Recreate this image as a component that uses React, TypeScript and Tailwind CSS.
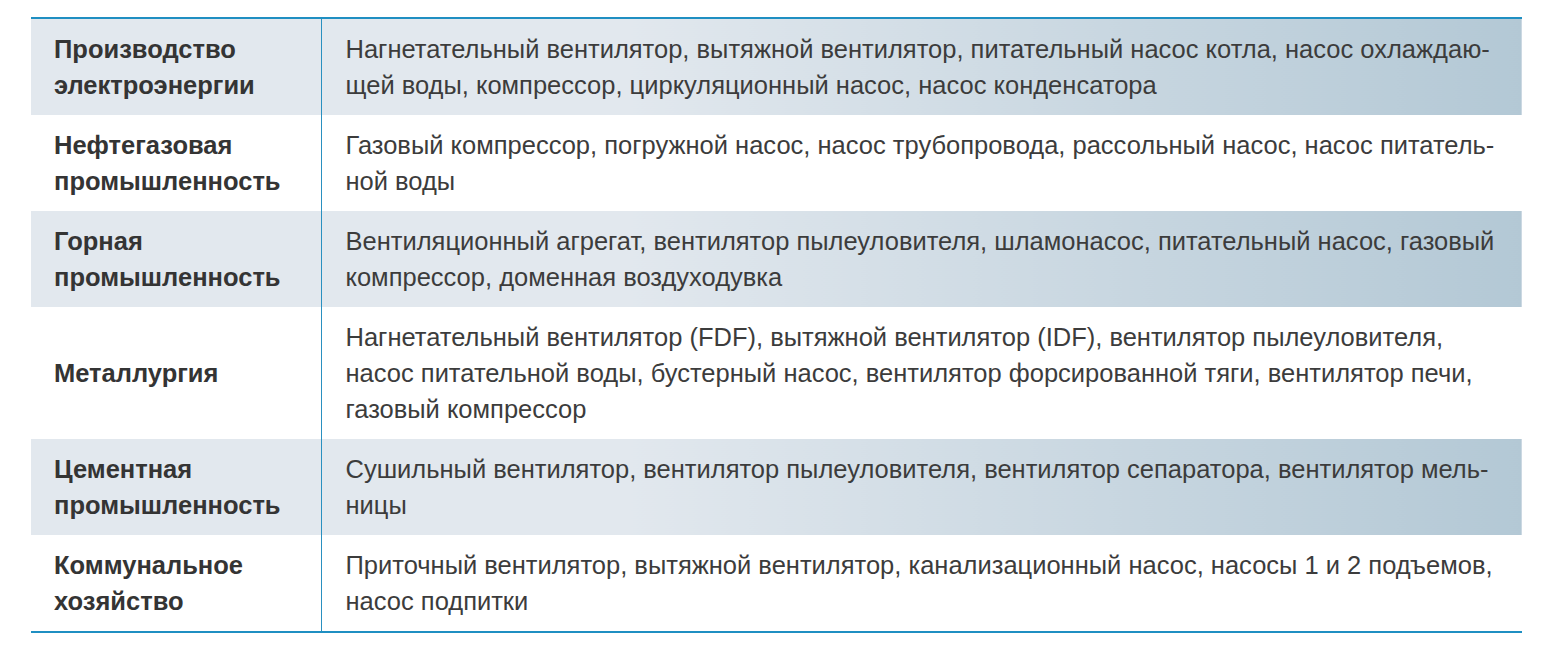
const rows = [
  {
    label: ["Производство", "электроэнергии"],
    text: [
      "Нагнетательный вентилятор, вытяжной вентилятор, питательный насос котла, насос охлаждаю-",
      "щей воды, компрессор, циркуляционный насос, насос конденсатора",
    ],
  },
  {
    label: ["Нефтегазовая", "промышленность"],
    text: [
      "Газовый компрессор, погружной насос, насос трубопровода, рассольный насос, насос питатель-",
      "ной воды",
    ],
  },
  {
    label: ["Горная", "промышленность"],
    text: [
      "Вентиляционный агрегат, вентилятор пылеуловителя, шламонасос, питательный насос, газовый",
      "компрессор, доменная воздуходувка",
    ],
  },
  {
    label: ["Металлургия"],
    text: [
      "Нагнетательный вентилятор (FDF), вытяжной вентилятор (IDF), вентилятор пылеуловителя,",
      "насос питательной воды, бустерный насос, вентилятор форсированной тяги, вентилятор печи,",
      "газовый компрессор",
    ],
  },
  {
    label: ["Цементная", "промышленность"],
    text: [
      "Сушильный вентилятор, вентилятор пылеуловителя, вентилятор сепаратора, вентилятор мель-",
      "ницы",
    ],
  },
  {
    label: ["Коммунальное", "хозяйство"],
    text: [
      "Приточный вентилятор, вытяжной вентилятор, канализационный насос, насосы 1 и 2 подъемов,",
      "насос подпитки",
    ],
  },
]

export default function App() {
  return (
    <div className="w-[1549px] h-[656px] bg-white pt-[17px] pl-[31px] font-['Liberation_Sans',Arial,sans-serif]">
      <table className="w-[1491px] border-collapse border-t-2 border-b-2 border-[#1f8fc2]">
        <tbody>
          {rows.map((row, i) => {
            const shaded = i % 2 === 0
            return (
              <tr key={i}>
                <td
                  className={`w-[290px] align-middle pl-[23px] pr-3 py-3 text-[25.5px] leading-[36px] font-bold text-[#343434] border-r border-[#2a90c0] ${
                    shaded ? "bg-[#e2e8ee]" : "bg-white"
                  }`}
                >
                  {row.label.map((l, j) => (
                    <div key={j}>{l}</div>
                  ))}
                </td>
                <td
                  className={`align-middle pl-[24px] pr-3 py-3 text-[25.5px] leading-[36px] text-[#3c3c3c] ${
                    shaded ? "bg-linear-to-r from-[#e2e8ee] from-25% to-[#b3c8d5]" : "bg-white"
                  }`}
                >
                  {row.text.map((t, j) => (
                    <div key={j} className="whitespace-nowrap">{t}</div>
                  ))}
                </td>
              </tr>
            )
          })}
        </tbody>
      </table>
    </div>
  )
}
